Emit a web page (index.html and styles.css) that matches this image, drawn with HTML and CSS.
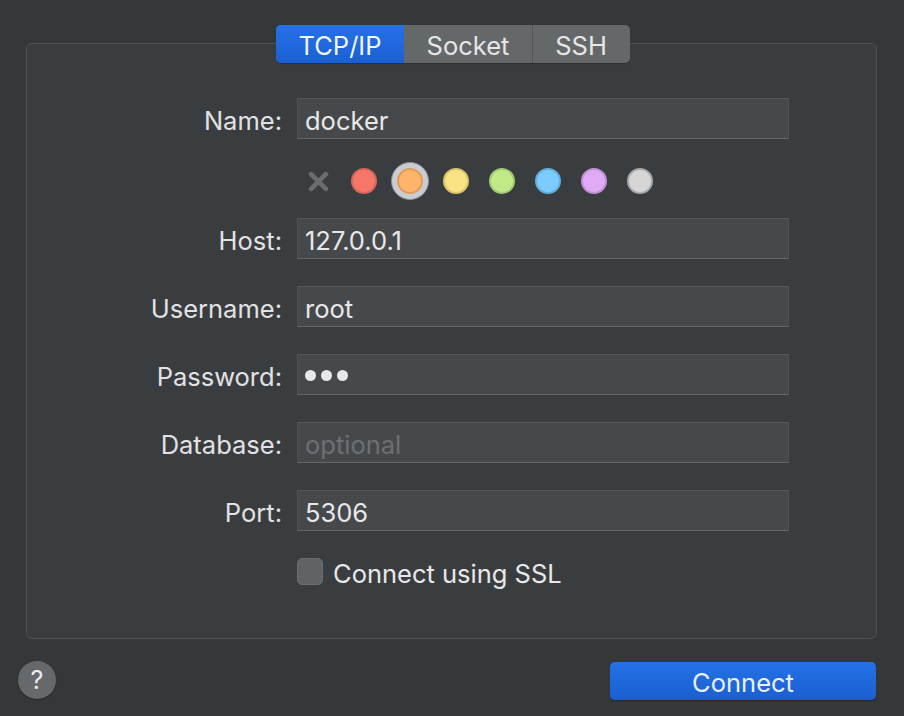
FILE: index.html
```html
<!DOCTYPE html>
<html lang="en">
<head>
<meta charset="utf-8">
<title>Connection</title>
<link rel="stylesheet" href="styles.css">
</head>
<body>
<div class="window">
  <div class="tabs">
    <div class="seg seg-tcp active">TCP/IP</div>
    <div class="seg seg-socket">Socket</div>
    <div class="seg seg-ssh">SSH</div>
  </div>
  <div class="panel">
    <div class="row">
      <label class="label">Name:</label>
      <div class="field">docker</div>
    </div>
    <div class="colors">
      <span class="swatch clear"><svg width="21" height="21" viewBox="0 0 20 20"><path d="M3 3 L17 17 M17 3 L3 17" stroke="#6a6d70" stroke-width="4.5" stroke-linecap="round"/></svg></span>
      <span class="swatch"><span class="dot red"></span></span>
      <span class="swatch"><span class="ring"><span class="dot orange"></span></span></span>
      <span class="swatch"><span class="dot yellow"></span></span>
      <span class="swatch"><span class="dot green"></span></span>
      <span class="swatch"><span class="dot blue"></span></span>
      <span class="swatch"><span class="dot purple"></span></span>
      <span class="swatch"><span class="dot gray"></span></span>
    </div>
    <div class="row">
      <label class="label">Host:</label>
      <div class="field">127.0.0.1</div>
    </div>
    <div class="row">
      <label class="label">Username:</label>
      <div class="field">root</div>
    </div>
    <div class="row">
      <label class="label">Password:</label>
      <div class="field"><span class="pw"></span><span class="pw"></span><span class="pw"></span></div>
    </div>
    <div class="row">
      <label class="label">Database:</label>
      <div class="field placeholder">optional</div>
    </div>
    <div class="row">
      <label class="label">Port:</label>
      <div class="field">5306</div>
    </div>
    <div class="check-row">
      <span class="checkbox"></span>
      <span class="check-label">Connect using SSL</span>
    </div>
  </div>
  <div class="footer">
    <div class="help">?</div>
    <div class="connect">Connect</div>
  </div>
</div>
</body>
</html>
```
FILE: styles.css
```css
html, body {
  margin: 0;
  padding: 0;
  background: #35383b;
  width: 904px;
  height: 716px;
  overflow: hidden;
}
body {
  font-family: Inter, "Liberation Sans", sans-serif;
  color: #e6e6e6;
  font-size: 25.5px;
}
.window {
  padding: 25px 27px 0 26px;
}
.tabs {
  display: flex;
  width: 354px;
  height: 38px;
  margin-left: 250px;
  position: relative;
  z-index: 2;
  border-radius: 5px;
  overflow: hidden;
  background: #656869;
  box-shadow: 0 1px 1px rgba(0,0,0,0.25);
}
.seg {
  display: flex;
  align-items: center;
  justify-content: center;
  color: #e6e6e6;
  padding-top: 2px;
  box-sizing: border-box;
}
.seg-tcp { width: 128px; }
.seg-socket { width: 129px; border-right: 1px solid #535557; }
.seg-ssh { width: 96px; }
.seg.active {
  background: linear-gradient(#2571e9, #1b60d2);
  color: #f2f6ff;
}
.panel {
  margin-top: -20px;
  height: 596px;
  box-sizing: border-box;
  border: 1px solid #4f5255;
  border-radius: 6px;
  background: #3a3d40;
  padding: 54px 0 0 0;
}
.row {
  display: flex;
  align-items: center;
  height: 41px;
  margin-bottom: 27px;
}
.label {
  width: 255px;
  margin-right: 15px;
  text-align: right;
  color: #e2e2e2;
  padding-top: 4px;
}
.field {
  width: 492px;
  height: 41px;
  box-sizing: border-box;
  background: #46494c;
  border-top: 1px solid #56595c;
  border-bottom: 1px solid #65686b;
  border-left: 1px solid #505356;
  border-right: 1px solid #505356;
  padding: 4px 7px 0;
  display: flex;
  align-items: center;
  color: #e8e8e8;
}
.placeholder {
  color: #6d7073;
}
.pw {
  width: 11px;
  height: 11px;
  border-radius: 50%;
  background: #e8e8e8;
  margin-right: 5px;
  margin-top: -2px;
}
.colors {
  display: flex;
  align-items: center;
  height: 40px;
  margin: -5px 0 17px 268px;
}
.swatch {
  width: 46px;
  height: 40px;
  display: flex;
  align-items: center;
  justify-content: center;
}
.dot {
  width: 22px;
  height: 22px;
  border-radius: 50%;
  border: 2px solid;
  display: block;
}
.ring {
  width: 38px;
  height: 38px;
  box-sizing: border-box;
  border-radius: 50%;
  background: #c9cdd3;
  border: 1px solid #8e9196;
  display: flex;
  align-items: center;
  justify-content: center;
}
.red { background: #f6776a; border-color: #d8655a; }
.orange { background: #feb56b; border-color: #e29b55; }
.yellow { background: #f9e384; border-color: #d9c46c; }
.green { background: #c2e988; border-color: #a3cb70; }
.blue { background: #7ccbfd; border-color: #62aee0; }
.purple { background: #e1aaf4; border-color: #c38fd7; }
.gray { background: #d6d6d6; border-color: #a9a9a9; }
.check-row {
  display: flex;
  align-items: center;
  height: 27px;
  margin-left: 270px;
}
.checkbox {
  width: 26px;
  height: 27px;
  box-sizing: border-box;
  border-radius: 5px;
  background: #606366;
  border: 1px solid #6b6e71;
  margin-right: 10px;
}
.check-label {
  color: #e8e8e8;
  padding-top: 4px;
}
.footer {
  display: flex;
  justify-content: space-between;
  align-items: center;
  margin-top: 20px;
  margin-left: -8px;
  margin-right: 1px;
}
.help {
  width: 38px;
  height: 38px;
  border-radius: 50%;
  background: #66696b;
  color: #ececec;
  display: flex;
  align-items: center;
  justify-content: center;
  font-size: 25px;
  box-shadow: 0 1px 1px rgba(0,0,0,0.3);
}
.connect {
  width: 266px;
  height: 38px;
  box-sizing: border-box;
  padding-top: 3px;
  border-radius: 5px;
  background: linear-gradient(#2471e8, #1c5fd0);
  color: #e9f1ff;
  display: flex;
  align-items: center;
  justify-content: center;
  margin-top: 3px;
  box-shadow: 0 1px 1px rgba(0,0,0,0.3);
}
```
